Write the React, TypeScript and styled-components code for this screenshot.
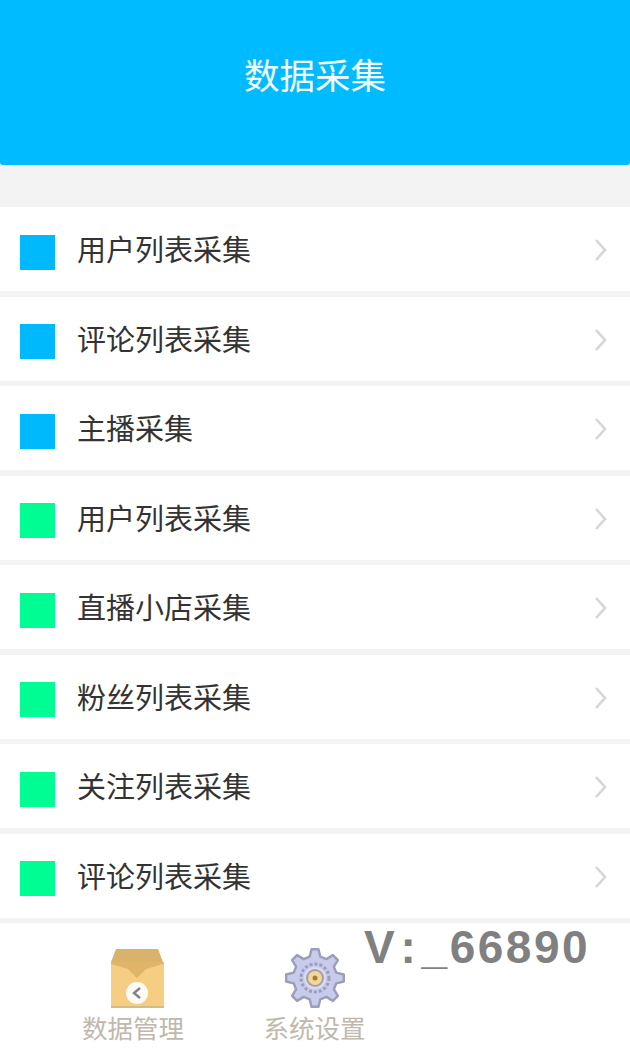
import styled, { createGlobalStyle } from 'styled-components';

const GlobalStyle = createGlobalStyle`
  html, body {
    margin: 0;
    padding: 0;
    background: #f3f3f4;
    font-family: "Liberation Sans", "Noto Sans CJK SC", sans-serif;
  }
`;

const Page = styled.div`
  position: relative;
  width: 630px;
  height: 1060px;
  overflow: hidden;
  display: flex;
  flex-direction: column;
  background: #f3f3f4;
`;

const Header = styled.header`
  height: 165px;
  flex-shrink: 0;
  padding-top: 46px;
  box-sizing: border-box;
  background: #00bbff;
  border-radius: 0 0 3px 3px;
  text-align: center;
`;

const Title = styled.h1`
  margin: 0;
  font-family: "Noto Sans CJK SC", sans-serif;
  font-size: 35.5px;
  line-height: 56px;
  font-weight: 400;
  color: #f4fbff;
`;

const List = styled.ul`
  list-style: none;
  margin: 42px 0 0;
  padding: 0;
  display: flex;
  flex-direction: column;
  gap: 5.5px;
`;

const Row = styled.li`
  height: 84px;
  display: flex;
  align-items: center;
  padding: 0 23px 0 20px;
  background: #fff;
`;

const Marker = styled.span<{ $tone: 'blue' | 'green' }>`
  width: 35px;
  height: 35px;
  margin-top: 6px;
  flex-shrink: 0;
  background: ${({ $tone }) => ($tone === 'blue' ? '#00b9fd' : '#00fd94')};
`;

const Label = styled.span`
  flex: 1;
  margin: 0 0 2px 22px;
  font-family: "Noto Sans CJK SC", sans-serif;
  font-size: 29px;
  line-height: 40px;
  color: #333;
`;

const Chevron = styled.svg`
  width: 13px;
  height: 24px;
  margin-top: 2px;
  fill: none;
  stroke: #d6d6d6;
  stroke-width: 2.6;
`;

const TabBar = styled.nav`
  margin-top: 5.5px;
  flex: 1;
  display: flex;
  padding: 23.5px 0 0 73px;
  gap: 61.5px;
  background: #fff;
`;

const Tab = styled.div`
  width: 120px;
  display: flex;
  flex-direction: column;
  align-items: center;
`;

const TabIcon = styled.svg`
  width: 64px;
  height: 64px;
  flex-shrink: 0;
`;

const TabLabel = styled.span`
  margin-top: -2px;
  font-family: "Noto Sans CJK SC", sans-serif;
  font-size: 25.5px;
  line-height: 36px;
  white-space: nowrap;
  color: #c0b8ab;
`;

const Watermark = styled.div`
  position: absolute;
  left: 364px;
  top: 922px;
  font-family: "Liberation Sans", sans-serif;
  font-size: 46px;
  line-height: 50px;
  font-weight: 700;
  letter-spacing: 2.5px;
  word-spacing: -12px;
  white-space: pre;
  color: #808080;
`;

const items: { label: string; tone: 'blue' | 'green' }[] = [
  { label: '用户列表采集', tone: 'blue' },
  { label: '评论列表采集', tone: 'blue' },
  { label: '主播采集', tone: 'blue' },
  { label: '用户列表采集', tone: 'green' },
  { label: '直播小店采集', tone: 'green' },
  { label: '粉丝列表采集', tone: 'green' },
  { label: '关注列表采集', tone: 'green' },
  { label: '评论列表采集', tone: 'green' },
];

function BoxIcon() {
  return (
    <TabIcon viewBox="0 0 64 64">
      <path d="M15 2h42l5 13H10z" fill="#d9b26c" />
      <path d="M10 15h53v45H10z" fill="#f5cd83" />
      <path d="M10 15h53l-1 2-17 5-9 9-9-9-17-5z" fill="#e0b469" />
      <path d="M10 59h53v2H10z" fill="#d5b987" />
      <circle cx="36" cy="46" r="11" fill="#fcfbf6" />
      <path d="M39 41l-6 5 6 5" fill="none" stroke="#7f8290" strokeWidth="2.4" />
    </TabIcon>
  );
}

function gearOutline() {
  const point = (deg: number, r: number) => {
    const a = (deg * Math.PI) / 180;
    return `${(32 + r * Math.sin(a)).toFixed(1)},${(31 - r * Math.cos(a)).toFixed(1)}`;
  };
  const points: string[] = [];
  for (let k = 0; k < 8; k++) {
    const a = k * 45;
    points.push(point(a - 14, 22), point(a - 7, 29), point(a + 7, 29), point(a + 14, 22));
  }
  return points.join(' ');
}

function GearIcon() {
  return (
    <TabIcon viewBox="0 0 64 64">
      <polygon points={gearOutline()} fill="#c8cbec" stroke="#9b9db9" strokeWidth="2.4" strokeLinejoin="round" />
      <circle cx="32" cy="31" r="14" fill="none" stroke="#9a9cc0" strokeWidth="3" strokeDasharray="3 2" />
      <circle cx="32" cy="31" r="11" fill="#dcdcec" />
      <circle cx="32" cy="31" r="9" fill="#a2a0ad" />
      <circle cx="32" cy="31" r="7" fill="#f3d794" />
      <circle cx="32" cy="31" r="2.5" fill="#a07c3a" />
    </TabIcon>
  );
}

export default function App() {
  return (
    <Page>
      <GlobalStyle />
      <Header>
        <Title>数据采集</Title>
      </Header>
      <List>
        {items.map((item, i) => (
          <Row key={i}>
            <Marker $tone={item.tone} />
            <Label>{item.label}</Label>
            <Chevron viewBox="0 0 13 24">
              <path d="M2 2l9 10-9 10" />
            </Chevron>
          </Row>
        ))}
      </List>
      <TabBar>
        <Tab>
          <BoxIcon />
          <TabLabel>数据管理</TabLabel>
        </Tab>
        <Tab>
          <GearIcon />
          <TabLabel>系统设置</TabLabel>
        </Tab>
      </TabBar>
      <Watermark>V : _66890</Watermark>
    </Page>
  );
}
